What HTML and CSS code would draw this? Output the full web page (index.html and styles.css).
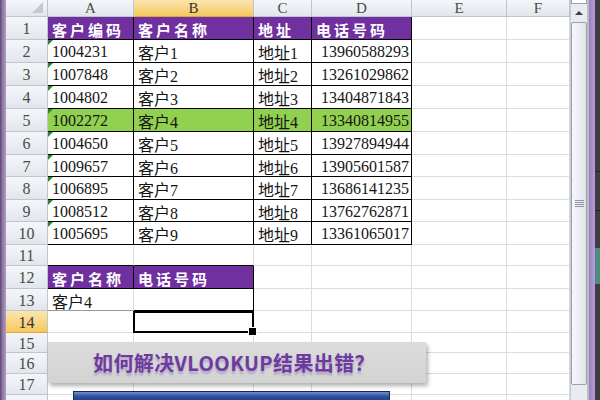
FILE: index.html
```html
<!DOCTYPE html>
<html lang="zh">
<head>
<meta charset="utf-8">
<title>VLOOKUP</title>
<link rel="stylesheet" href="styles.css">
</head>
<body>
<div class="app">
  <div class="edge-l"></div>
  <div class="sheet">
    <div class="c ch corner"></div><div class="c ch">A</div><div class="c ch selh">B</div><div class="c ch">C</div><div class="c ch">D</div><div class="c ch">E</div><div class="c ch">F</div>

    <div class="c rh">1</div><div class="c t p">客户编码</div><div class="c t p">客户名称</div><div class="c t p">地址</div><div class="c t p">电话号码</div><div class="c"></div><div class="c"></div>
    <div class="c rh">2</div><div class="c t tri">1004231</div><div class="c t">客户1</div><div class="c t">地址1</div><div class="c t r">13960588293</div><div class="c"></div><div class="c"></div>
    <div class="c rh">3</div><div class="c t tri">1007848</div><div class="c t">客户2</div><div class="c t">地址2</div><div class="c t r">13261029862</div><div class="c"></div><div class="c"></div>
    <div class="c rh">4</div><div class="c t tri">1004802</div><div class="c t">客户3</div><div class="c t">地址3</div><div class="c t r">13404871843</div><div class="c"></div><div class="c"></div>
    <div class="c rh">5</div><div class="c t g tri">1002272</div><div class="c t g">客户4</div><div class="c t g">地址4</div><div class="c t g r">13340814955</div><div class="c"></div><div class="c"></div>
    <div class="c rh">6</div><div class="c t tri">1004650</div><div class="c t">客户5</div><div class="c t">地址5</div><div class="c t r">13927894944</div><div class="c"></div><div class="c"></div>
    <div class="c rh">7</div><div class="c t tri">1009657</div><div class="c t">客户6</div><div class="c t">地址6</div><div class="c t r">13905601587</div><div class="c"></div><div class="c"></div>
    <div class="c rh">8</div><div class="c t tri">1006895</div><div class="c t">客户7</div><div class="c t">地址7</div><div class="c t r">13686141235</div><div class="c"></div><div class="c"></div>
    <div class="c rh">9</div><div class="c t tri">1008512</div><div class="c t">客户8</div><div class="c t">地址8</div><div class="c t r">13762762871</div><div class="c"></div><div class="c"></div>
    <div class="c rh">10</div><div class="c t tri">1005695</div><div class="c t">客户9</div><div class="c t">地址9</div><div class="c t r">13361065017</div><div class="c"></div><div class="c"></div>

    <div class="c rh">11</div><div class="c bb"></div><div class="c bb"></div><div class="c"></div><div class="c"></div><div class="c"></div><div class="c"></div>
    <div class="c rh">12</div><div class="c t p">客户名称</div><div class="c t p">电话号码</div><div class="c"></div><div class="c"></div><div class="c"></div><div class="c"></div>
    <div class="c rh">13</div><div class="c bm">客户4</div><div class="c t"></div><div class="c"></div><div class="c"></div><div class="c"></div><div class="c"></div>
    <div class="c rh selh">14</div><div class="c"></div><div class="c active"></div><div class="c"></div><div class="c"></div><div class="c"></div><div class="c"></div>
    <div class="c rh">15</div><div class="c"></div><div class="c"></div><div class="c"></div><div class="c"></div><div class="c"></div><div class="c"></div>
    <div class="c rh">16</div><div class="c"></div><div class="c"></div><div class="c"></div><div class="c"></div><div class="c"></div><div class="c"></div>
    <div class="c rh">17</div><div class="c"></div><div class="c"></div><div class="c"></div><div class="c"></div><div class="c"></div><div class="c"></div>
    <div class="c rh"></div><div class="c"></div><div class="c"></div><div class="c"></div><div class="c"></div><div class="c"></div><div class="c"></div>

    <div class="banner"><span class="banner-text">如何解决VLOOKUP结果出错？</span></div>
    <div class="bluebar"></div>
  </div>
  <div class="vscroll">
    <div class="split"></div>
    <div class="up"></div>
    <div class="thumb"><span class="grip"></span></div>
  </div>
  <div class="edge-r">
    <div class="er-a"></div>
    <div class="er-b"></div>
    <div class="er-c">
      <div class="er-line l1"></div>
      <div class="er-line l2"></div>
      <div class="er-teal"></div>
    </div>
  </div>
</div>
</body>
</html>
```

FILE: styles.css
```css
* { box-sizing: border-box; margin: 0; padding: 0; }
html, body { width: 600px; height: 400px; overflow: hidden; background: #fff; }

.app { display: flex; width: 600px; height: 400px; }

.edge-l { width: 6px; flex: none; background: linear-gradient(to right, #5a4a6a, #8f7aa8 45%, #b09ac8); }

.sheet {
  position: relative;
  width: 564px;
  height: 400px;
  flex: none;
  overflow: hidden;
  display: grid;
  grid-template-columns: 42px 86px 120px 58px 100px 95px 63px;
  grid-template-rows: 17px 23px 23px 23px 23px 23px 23px 22px 23px 22px 23px 21px 23px 22px 22px 20px 21px 21px 30px;
  align-content: start;
}

.c {
  border-right: 1px solid #dadcde;
  border-bottom: 1px solid #dadcde;
  display: flex;
  align-items: center;
  padding: 2px 4px 0;
  white-space: nowrap;
  overflow: hidden;
  font: 16px "Liberation Serif", "Noto Sans CJK SC", serif;
  color: #151515;
}

.ch, .rh {
  background: linear-gradient(#f4f6f9, #e2e6ec);
  border-right-color: #bfc5cd;
  border-bottom-color: #bfc5cd;
  justify-content: center;
  color: #4a4a4a;
  padding: 0;
}
.ch { font-size: 15px; padding-top: 1px; }
.rh { font-size: 16px; padding-top: 2px; }

.selh { background: linear-gradient(#fbe6b0, #f5c95f); color: #333; border-bottom-color: #d9a640; }

.corner { position: relative; }
.corner::after {
  content: "";
  position: absolute;
  right: 4px;
  bottom: 3px;
  border-left: 11px solid transparent;
  border-bottom: 11px solid #c3c9d1;
}

.t { border-right-color: #000; border-bottom-color: #000; }
.bb { border-bottom-color: #000; }
.bm { border-bottom-color: #9a9a9a; }
.p { background: #7030a0; color: #fff; font-weight: bold; font-size: 15px; letter-spacing: 3px; }
.g { background: #92d050; }
.r { justify-content: flex-end; padding-right: 2px; }

.tri { position: relative; }
.tri::before {
  content: "";
  position: absolute;
  left: 0;
  top: 0;
  border-top: 5px solid #1f8a2a;
  border-right: 5px solid transparent;
}

.active { position: relative; overflow: visible; z-index: 2; }
.active::before {
  content: "";
  position: absolute;
  left: -1px;
  top: 0;
  right: -1px;
  bottom: -1px;
  border: 2px solid #000;
}
.active::after {
  content: "";
  position: absolute;
  right: -4px;
  bottom: -4px;
  width: 7px;
  height: 7px;
  background: #000;
  border: 1px solid #fff;
}

.banner {
  position: absolute;
  left: 42px;
  top: 342px;
  width: 378px;
  height: 41px;
  background: linear-gradient(#dcdcdc, #d3d3d3);
  box-shadow: 2px 3px 4px rgba(0, 0, 0, 0.3);
  display: flex;
  align-items: center;
  justify-content: center;
  z-index: 3;
}
.banner-text {
  font: bold 20px "Noto Sans CJK SC", "Noto Sans", sans-serif;
  color: #6b3c9e;
  letter-spacing: 0.4px;
  margin-left: -6px;
  text-shadow: 0 3px 2px rgba(107, 60, 158, 0.3);
}

.bluebar {
  position: absolute;
  left: 67px;
  top: 391px;
  width: 317px;
  height: 14px;
  background: linear-gradient(#6f8fcf, #2c4d96 40%, #1f3c80);
  border: 1px solid #132a60;
  z-index: 3;
}

.vscroll {
  width: 17px;
  flex: none;
  background: #e8ebf0;
  border-left: 1px solid #c5cad2;
  display: flex;
  flex-direction: column;
}
.split { height: 4px; background: #fff; border: 1px solid #98a1ac; border-top: none; }
.up { height: 17px; display: flex; align-items: center; justify-content: center; }
.up::before {
  content: "";
  border-left: 4px solid transparent;
  border-right: 4px solid transparent;
  border-bottom: 4px solid #3a3f46;
}
.thumb {
  height: 363px;
  margin-top: 1px;
  border: 1px solid #98a1ac;
  border-radius: 2px;
  background: linear-gradient(to right, #f6f8fb, #dfe3ea);
  display: flex;
  align-items: center;
  justify-content: center;
}
.grip {
  width: 9px;
  height: 7px;
  background: repeating-linear-gradient(#8e959e 0 1px, transparent 1px 2px);
}

.edge-r { width: 13px; flex: none; display: flex; }
.er-a { width: 2px; background: #b9bdc5; }
.er-b { width: 6px; background: linear-gradient(to right, #9b80bf, #b89ed6); }
.er-c { flex: 1; background: #3e3e42; display: flex; flex-direction: column; padding-top: 171px; }
.er-line { height: 1px; background: #222; }
.l2 { margin-top: 38px; }
.er-teal { height: 36px; margin-top: 37px; background: #4d8a80; }
```
